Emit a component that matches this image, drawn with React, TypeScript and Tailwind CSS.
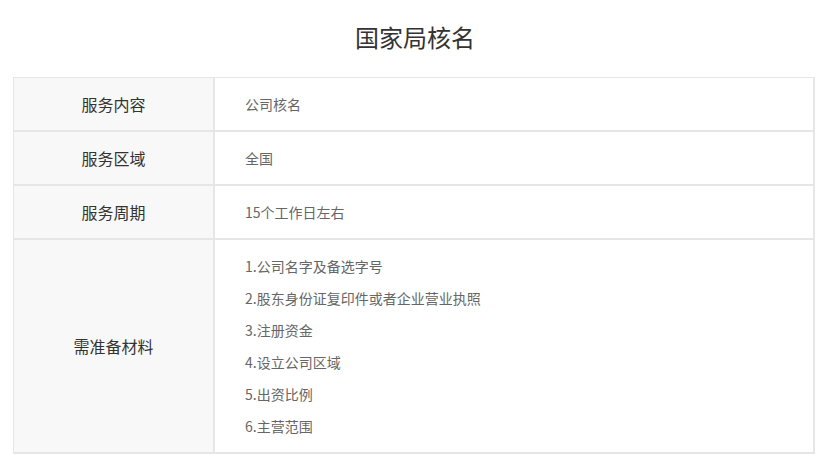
const rows: { label: string; value: string }[] = [
  { label: '服务内容', value: '公司核名' },
  { label: '服务区域', value: '全国' },
  { label: '服务周期', value: '15个工作日左右' },
];

const materials = [
  '1.公司名字及备选字号',
  '2.股东身份证复印件或者企业营业执照',
  '3.注册资金',
  '4.设立公司区域',
  '5.出资比例',
  '6.主营范围',
];

export default function App() {
  return (
    <div className="w-[830px] h-[468px] bg-white font-['Microsoft_YaHei','Noto_Sans_CJK_SC',sans-serif]">
      <h1 className="h-[77px] flex items-center justify-center text-[24px] text-[#333] pb-[4px]">
        国家局核名
      </h1>

      <div className="ml-[13px] w-[802px] border-t border-l border-[#e6e6e6]">
        {rows.map((row) => (
          <div key={row.label} className="flex">
            <div className="w-[201px] h-[54px] flex items-center justify-center bg-[#f8f8f8] border-r-2 border-b-2 border-[#e6e6e6] text-[16px] text-[#333]">
              {row.label}
            </div>
            <div className="flex-1 h-[54px] flex items-center pl-[30px] border-r-2 border-b-2 border-[#e6e6e6] text-[14px] text-[#666]">
              {row.value}
            </div>
          </div>
        ))}

        <div className="flex">
          <div className="w-[201px] flex items-center justify-center bg-[#f8f8f8] border-r-2 border-b-2 border-[#e6e6e6] text-[16px] text-[#333]">
            需准备材料
          </div>
          <ul className="flex-1 py-[10px] pl-[30px] border-r-2 border-b-2 border-[#e6e6e6] text-[14px] text-[#666]">
            {materials.map((item) => (
              <li key={item} className="h-[32px] flex items-center">
                {item}
              </li>
            ))}
          </ul>
        </div>
      </div>
    </div>
  );
}
